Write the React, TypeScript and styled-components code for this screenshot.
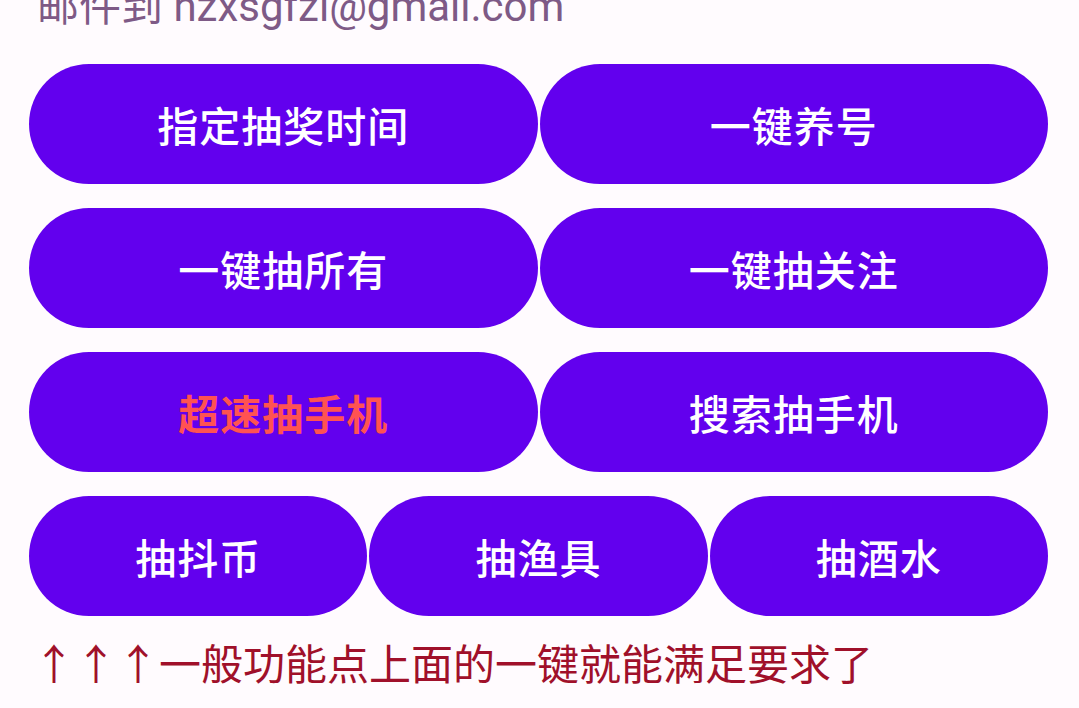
import React from 'react'
import styled, { createGlobalStyle } from 'styled-components'

const GlobalStyle = createGlobalStyle`
  html, body {
    margin: 0;
    padding: 0;
    background: #fffbfe;
    overflow: hidden;
  }
  body {
    font-family: Roboto, "Noto Sans CJK SC", sans-serif;
  }
`

const Page = styled.div`
  width: 1079px;
  height: 708px;
  box-sizing: border-box;
  padding: 0 31px 0 29px;
  display: flex;
  flex-direction: column;
`

const MailLine = styled.div`
  margin-top: -17px;
  margin-left: 8px;
  font-size: 42px;
  line-height: 48px;
  color: #7e5a86;
  white-space: nowrap;
`

const Grid = styled.div`
  margin-top: 33px;
  display: flex;
  flex-direction: column;
  gap: 24px;
`

const Row = styled.div`
  display: flex;
  gap: 2px;
`

const PillButton = styled.button<{ $hot?: boolean }>`
  flex: 1;
  height: 120px;
  border: none;
  border-radius: 60px;
  background: #6200ee;
  color: ${(p) => (p.$hot ? '#ff5252' : '#ffffff')};
  font-family: Roboto, "Noto Sans CJK SC", sans-serif;
  font-size: 41px;
  font-weight: ${(p) => (p.$hot ? 700 : 500)};
  letter-spacing: 1px;
  padding: 0;
  cursor: pointer;
`

const Hint = styled.div`
  margin-top: 22px;
  margin-left: 4px;
  font-size: 42px;
  line-height: 56px;
  color: #a0102a;
  white-space: nowrap;
`

const rows: { label: string; hot?: boolean }[][] = [
  [{ label: '指定抽奖时间' }, { label: '一键养号' }],
  [{ label: '一键抽所有' }, { label: '一键抽关注' }],
  [{ label: '超速抽手机', hot: true }, { label: '搜索抽手机' }],
  [{ label: '抽抖币' }, { label: '抽渔具' }, { label: '抽酒水' }],
]

export default function App() {
  return (
    <>
      <GlobalStyle />
      <Page>
        <MailLine>邮件到 hzxsgfzl@gmail.com</MailLine>
        <Grid>
          {rows.map((row, i) => (
            <Row key={i}>
              {row.map((b) => (
                <PillButton key={b.label} $hot={b.hot}>
                  {b.label}
                </PillButton>
              ))}
            </Row>
          ))}
        </Grid>
        <Hint>↑↑↑一般功能点上面的一键就能满足要求了</Hint>
      </Page>
    </>
  )
}
